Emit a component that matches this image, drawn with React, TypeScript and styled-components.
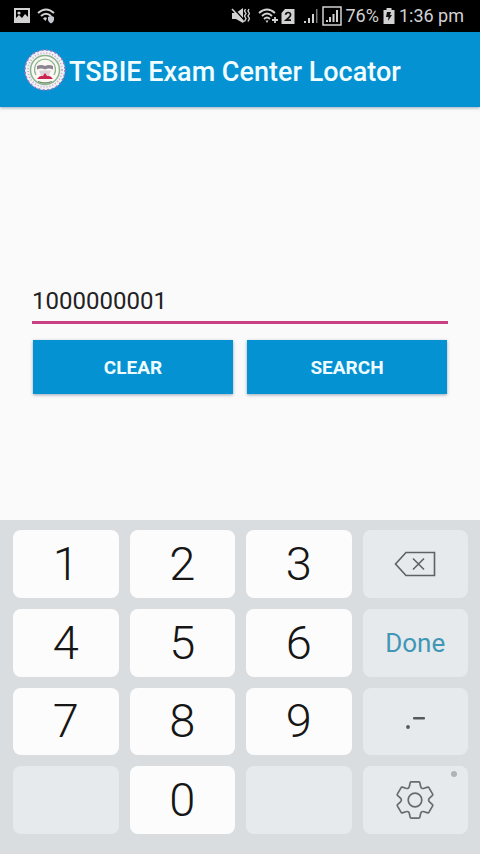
import React, { useState } from "react";
import styled, { createGlobalStyle, css } from "styled-components";

const GlobalStyle = createGlobalStyle`
  * { box-sizing: border-box; }
  body { margin: 0; background: #fafafa; font-family: Roboto, "Noto Sans", sans-serif; }
  button, input { font-family: inherit; margin: 0; }
`;

const Screen = styled.div`
  min-height: 100vh;
  display: flex;
  flex-direction: column;
`;

const StatusBar = styled.div`
  height: 32px;
  padding: 0 16px 0 13px;
  display: flex;
  align-items: center;
  justify-content: space-between;
  background: #000;
  color: #d2d2d2;
  font-size: 18px;
  line-height: 32px;
  svg { display: block; flex: none; }
`;

const StatusGroup = styled.div<{ $gap: number }>`
  display: flex;
  align-items: center;
  gap: ${(p) => p.$gap}px;
`;

const AppBar = styled.header`
  height: 75px;
  flex: none;
  display: flex;
  align-items: center;
  gap: 3px;
  padding: 0 24px;
  background: #0492d3;
  box-shadow: 0 1px 3px rgba(0, 50, 90, 0.4);
  svg { flex: none; }
`;

const Title = styled.h1`
  margin: 0;
  padding-top: 4px;
  color: #f2fdff;
  font-size: 27px;
  line-height: 32px;
  font-weight: 500;
  white-space: nowrap;
`;

const Main = styled.main`
  flex: 1;
  padding: 174px 32px 0;
`;

const NumberInput = styled.input`
  display: block;
  width: 100%;
  height: 43px;
  padding: 0;
  border: 0;
  border-bottom: 3px solid #cb3f83;
  border-radius: 0;
  outline: 0;
  background: transparent;
  color: #222;
  font-size: 24px;
  line-height: 32px;
`;

const Actions = styled.div`
  display: grid;
  grid-template-columns: 1fr 1fr;
  gap: 14px;
  padding: 16px 1px 0;
`;

const ActionButton = styled.button`
  height: 54px;
  border: 0;
  padding: 2px 0 0;
  background: #0492d3;
  color: #eefcff;
  font-size: 19px;
  line-height: 24px;
  font-weight: 700;
  box-shadow: 0 1px 3px rgba(0, 40, 80, 0.4);
`;

const Keypad = styled.section`
  flex: none;
  height: 334px;
  padding: 10px 12px 20px 13px;
  display: grid;
  grid-template-columns: repeat(4, 1fr);
  grid-template-rows: repeat(4, 1fr);
  gap: 11px;
  background: #dadde0;
`;

const Key = styled.button<{ $kind: "digit" | "tool" }>`
  position: relative;
  display: flex;
  align-items: center;
  justify-content: center;
  min-width: 0;
  padding: 0;
  border: 0;
  border-radius: 8px;
  background: #e7eaed;
  color: #3f97b5;
  font-size: 26px;
  line-height: 32px;
  ${(p) =>
    p.$kind === "digit" &&
    css`
      background: #fcfcfc;
      color: #161616;
      font-size: 47px;
      line-height: 56px;
      font-weight: 300;
    `}
`;

const LongPressDot = styled.span`
  position: absolute;
  top: 5px;
  right: 11px;
  width: 6px;
  height: 6px;
  border-radius: 50%;
  background: #b0b2b5;
`;

function ImageIcon() {
  return (
    <svg width="18" height="18" viewBox="0 0 18 18" fill="#d2d2d2">
      <path fillRule="evenodd" d="M1 1h16v15H1zM3 3v11h12V3z" />
      <path d="M3 11l3-3 3 3 3-4 4 4v4H3z" />
      <circle cx="6" cy="6" r="1.6" />
    </svg>
  );
}

function SecureWifiIcon() {
  return (
    <svg width="20" height="18" viewBox="0 0 20 18" fill="none" stroke="#d2d2d2" strokeWidth="2">
      <path d="M1 6Q9 -1 17 6M4 9Q9 4.500 14 9" />
      <path d="M6 11.500Q8 9.500 10 11L8.500 14z" fill="#d2d2d2" stroke="none" />
      <path d="M11 10l3-1.200L17 10v3q-.5 2.500-3 3.500-2.500-1-3-3.500z" fill="#c4c8cf" stroke="none" />
    </svg>
  );
}

function MutedIcon() {
  return (
    <svg width="19" height="18" viewBox="0 0 19 18">
      <path d="M1 6h4l7-5v15l-7-4H1z" fill="#d2d2d2" />
      <path d="M3 2l10 11" stroke="#000" strokeWidth="1.500" />
      <path d="M1 2l12 13" stroke="#d2d2d2" strokeWidth="1.600" />
      <path d="M14.500 2l-1 2 1.500 2.500-1.500 2.500 1.500 2.500-1.500 3M18 2l-1 2 1.500 2.500L17 9l1.500 2.500-1.500 3" fill="none" stroke="#d2d2d2" strokeWidth="1.400" />
    </svg>
  );
}

function WifiPlusIcon() {
  return (
    <svg width="20" height="18" viewBox="0 0 20 18" fill="none" stroke="#d2d2d2" strokeWidth="1.800">
      <path d="M1 6Q9 -1 17 6M4 9Q9 4 14 9M6 12Q9 9 12 12" />
      <path d="M7.500 13.500h3L9 16z" fill="#d2d2d2" stroke="none" />
      <path d="M14 13h6M17 10v6" />
    </svg>
  );
}

function SimIcon() {
  return (
    <svg width="14" height="17" viewBox="0 0 14 17">
      <path d="M4 1h9.500v15H.5V5z" fill="#d2d2d2" />
      <path d="M4.500 6.700Q5 4.500 7.200 4.500T9.600 6.700Q9.600 8 7.800 9.600L5 12.200h5" fill="none" stroke="#111" strokeWidth="1.700" />
    </svg>
  );
}

function SignalIcon({ framed = false }: { framed?: boolean }) {
  return framed ? (
    <svg width="20" height="20" viewBox="0 0 20 20">
      <rect x="1" y="1" width="18" height="18" fill="none" stroke="#d2d2d2" strokeWidth="1.500" />
      <path d="M4 16v-2h2v2zM7 16v-5h2v5zM10.500 16V8h2v8zM14 16V4h2v12z" fill="#d2d2d2" />
    </svg>
  ) : (
    <svg width="15" height="16" viewBox="0 0 15 16">
      <path d="M1 15v-2h2v2zM5 15v-5h2v5zM9 15V6h2v9z" fill="#d2d2d2" />
      <path d="M13 15V1h1.500v14z" fill="#777" />
    </svg>
  );
}

function BatteryIcon() {
  return (
    <svg width="12" height="18" viewBox="0 0 12 18">
      <path d="M3.500 1h5v2H11.500v14H.5V3h3z" fill="#d2d2d2" />
      <path d="M4 5h4L7 8h2l-4 6 .500-4H3z" fill="#111" />
    </svg>
  );
}

function BoardEmblem() {
  return (
    <svg width="42" height="42" viewBox="0 0 42 42">
      <circle cx="21" cy="21" r="20" fill="#f3eff5" />
      <circle cx="21" cy="21" r="20" fill="none" stroke="#9878ba" strokeWidth="1.600" strokeDasharray="2 2.500" />
      <circle cx="21" cy="21" r="17" fill="none" stroke="#b5b0c2" strokeWidth="1.600" strokeDasharray="1 2" />
      <circle cx="21" cy="21" r="14.500" fill="#fbf8f4" stroke="#8ab58c" strokeWidth="1.500" />
      <path d="M12 26a10.500 10.500 0 1 1 18 0" fill="none" stroke="#8bb68d" strokeWidth="1.300" />
      <path d="M13 17q4-2 8 0 4-2 8 0v3.500q-4-2-8 0-4-2-8 0z" fill="#8d8492" />
      <path d="M15 21.500h12l-2 5h-8z" fill="#ddd2d8" />
      <path d="M13 30q3-4 6-3l2-3 2 3q3-1 6 3z" fill="#cc2450" />
      <path d="M14 32.500q7 3 14 0" fill="none" stroke="#718e72" strokeWidth="1.300" />
    </svg>
  );
}

function BackspaceIcon() {
  return (
    <svg width="42" height="28" viewBox="0 0 42 28" fill="none" stroke="#5e6265" strokeWidth="1.600">
      <path d="M12 2.500h28.500v23H12L1.500 14z" />
      <path d="M19 8.500l11 11M30 8.500l-11 11" />
    </svg>
  );
}

function PunctuationIcon() {
  return (
    <svg width="20" height="18" viewBox="0 0 20 18" fill="#55595c">
      <circle cx="3" cy="15" r="1.900" />
      <rect x="8" y="5" width="12" height="2.500" rx="1" />
    </svg>
  );
}

function GearIcon() {
  const teeth = [0, 60, 120, 180, 240, 300];
  const at = (x: number, y: number, degrees: number) => {
    const a = (degrees * Math.PI) / 180;
    return `${(x * Math.cos(a) - y * Math.sin(a)).toFixed(2)} ${(x * Math.sin(a) + y * Math.cos(a)).toFixed(2)}`;
  };
  const outline = teeth
    .map(
      (t, i) =>
        `${i ? "L" : "M"}${at(-5.6, -13.8, t)}L${at(-4.8, -17.4, t)}Q${at(-4.6, -18.2, t)} ${at(-3.8, -18.2, t)}` +
        `L${at(3.8, -18.2, t)}Q${at(4.6, -18.2, t)} ${at(4.8, -17.4, t)}L${at(5.6, -13.8, t)}` +
        `Q${at(6.2, -10.8, t)} ${at(-5.6, -13.8, t + 60)}`
    )
    .join("");
  return (
    <svg width="40" height="40" viewBox="-20 -20 40 40" fill="none" stroke="#686c6f" strokeWidth="1.700" strokeLinejoin="round">
      <path d={`${outline}Z`} />
      <circle r="6.800" />
    </svg>
  );
}

export default function App() {
  const [value, setValue] = useState("1000000001");
  const digit = (n: string) => (
    <Key type="button" $kind="digit" onClick={() => setValue(value + n)}>
      {n}
    </Key>
  );
  return (
    <Screen>
      <GlobalStyle />
      <StatusBar>
        <StatusGroup $gap={6}>
          <ImageIcon />
          <SecureWifiIcon />
        </StatusGroup>
        <StatusGroup $gap={8}>
          <MutedIcon />
          <StatusGroup $gap={3}>
            <WifiPlusIcon />
            <SimIcon />
          </StatusGroup>
          <StatusGroup $gap={4}>
            <SignalIcon />
            <SignalIcon framed />
            <span>76%</span>
            <BatteryIcon />
            <span>1:36 pm</span>
          </StatusGroup>
        </StatusGroup>
      </StatusBar>
      <AppBar>
        <BoardEmblem />
        <Title>TSBIE Exam Center Locator</Title>
      </AppBar>
      <Main>
        <NumberInput
          aria-label="Hall ticket number"
          inputMode="none"
          value={value}
          onChange={(e) => setValue(e.target.value)}
        />
        <Actions>
          <ActionButton type="button" onClick={() => setValue("")}>
            CLEAR
          </ActionButton>
          <ActionButton type="button">SEARCH</ActionButton>
        </Actions>
      </Main>
      <Keypad aria-label="Keypad">
        {digit("1")}
        {digit("2")}
        {digit("3")}
        <Key type="button" $kind="tool" aria-label="Backspace" onClick={() => setValue(value.slice(0, -1))}>
          <BackspaceIcon />
        </Key>
        {digit("4")}
        {digit("5")}
        {digit("6")}
        <Key type="button" $kind="tool">
          Done
        </Key>
        {digit("7")}
        {digit("8")}
        {digit("9")}
        <Key type="button" $kind="tool" aria-label="Punctuation">
          <PunctuationIcon />
        </Key>
        <Key type="button" $kind="tool" aria-label="Blank" disabled />
        {digit("0")}
        <Key type="button" $kind="tool" aria-label="Blank" disabled />
        <Key type="button" $kind="tool" aria-label="Settings">
          <GearIcon />
          <LongPressDot />
        </Key>
      </Keypad>
    </Screen>
  );
}
